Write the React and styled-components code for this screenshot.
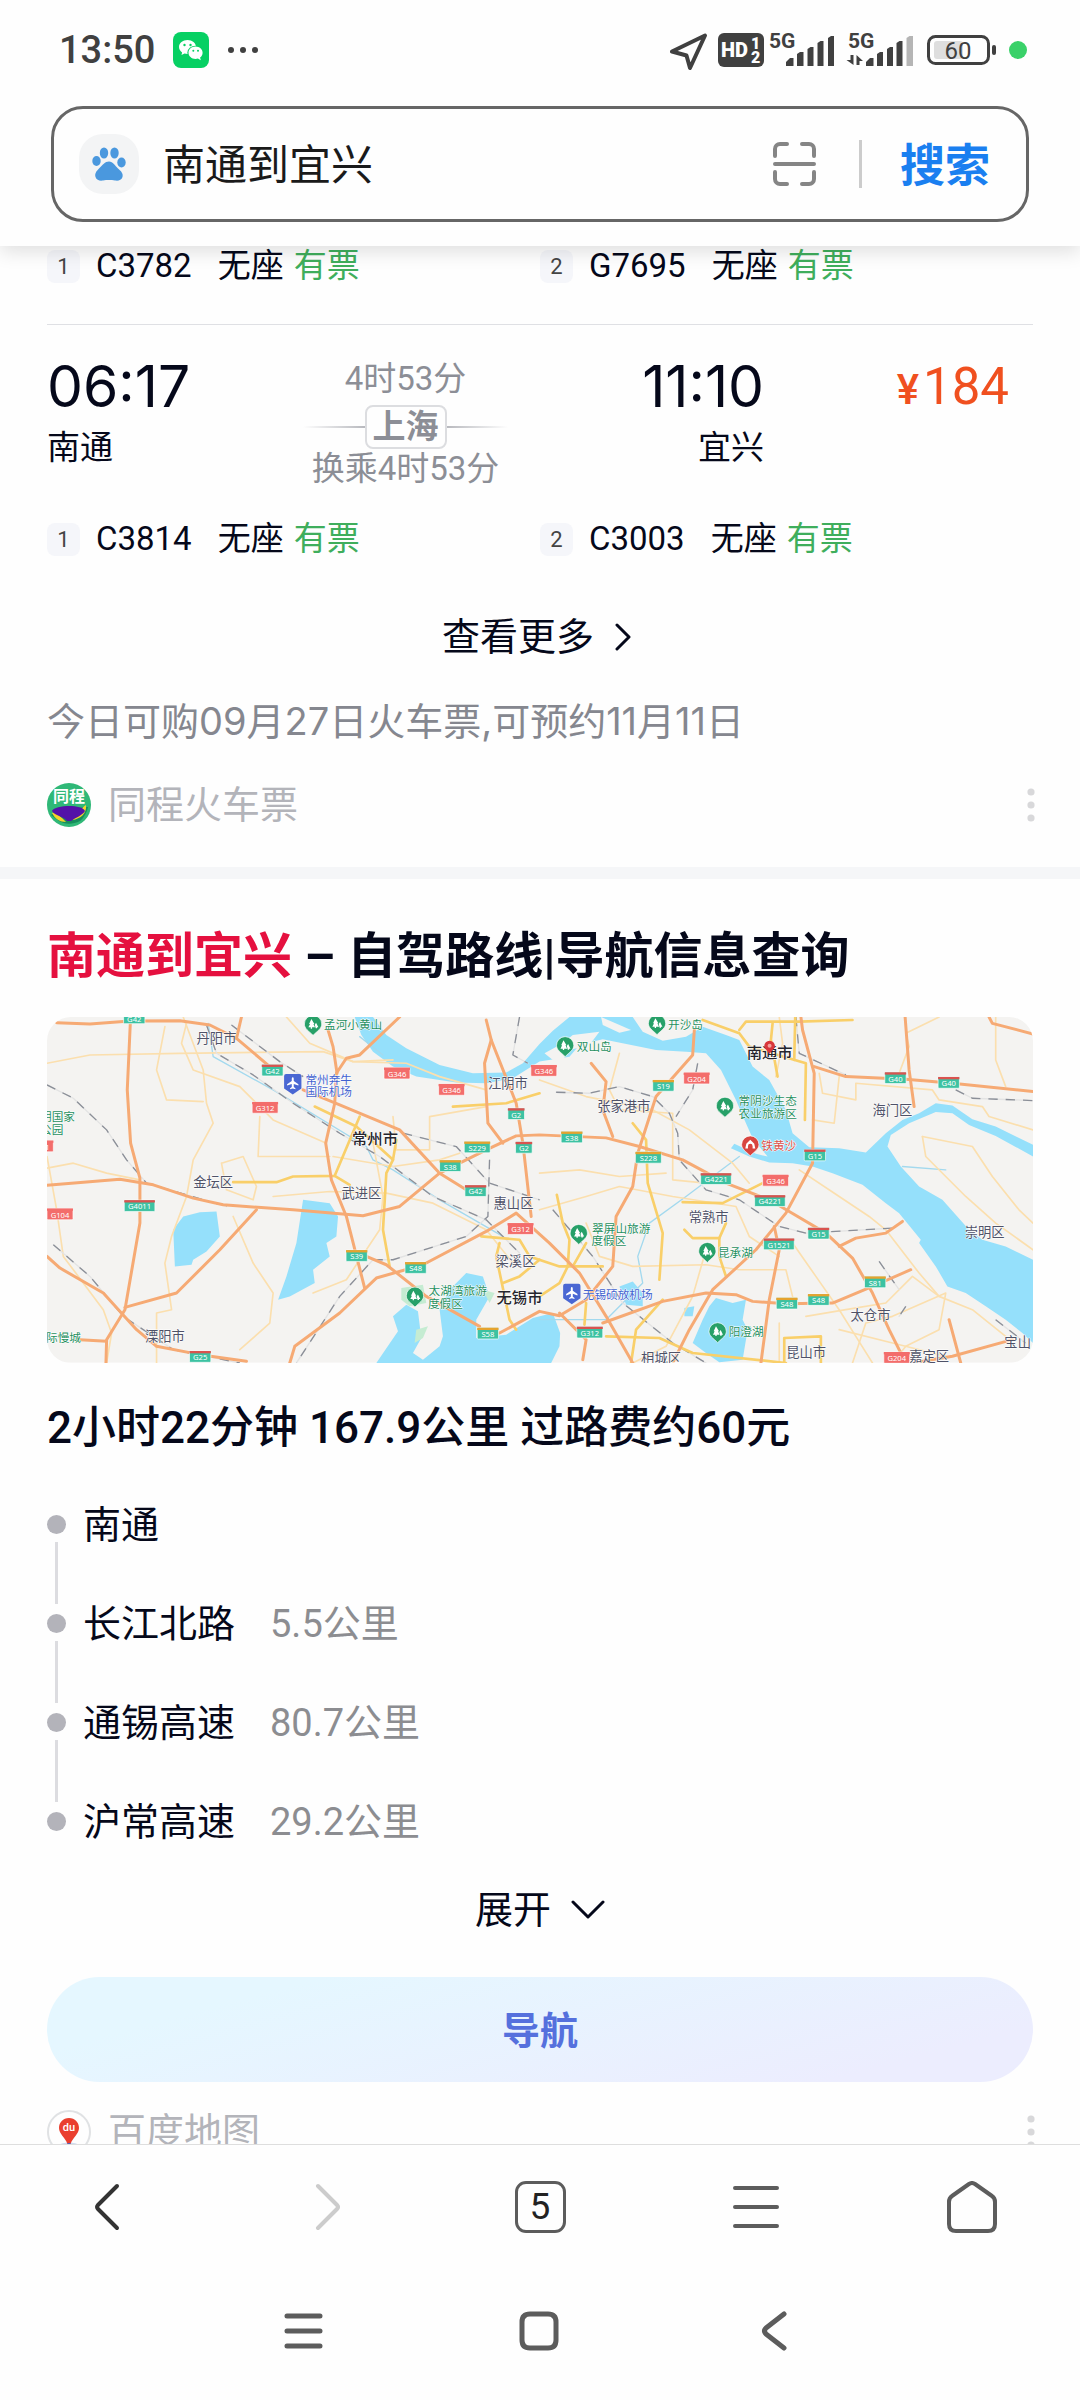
import React from 'react';
import styled, { createGlobalStyle } from 'styled-components';

const GlobalStyle = createGlobalStyle`
  * {
    box-sizing: border-box;
  }
  body {
    margin: 0;
    background: #fefefe;
    color: #05081a;
    font-family: Roboto, 'Noto Sans CJK SC', sans-serif;
  }
  button, input {
    font: inherit;
    color: inherit;
    padding: 0;
    border: none;
    background: none;
  }
  h2, p, ul {
    margin: 0;
    padding: 0;
  }
  svg {
    display: block;
    flex-shrink: 0;
  }
`;

const Page = styled.div`
  display: flex;
  flex-direction: column;
  height: 100vh;
`;

const Header = styled.header`
  z-index: 1;
  padding-bottom: 24px;
  background: #fefefe;
  box-shadow: 0 6px 18px rgba(0, 0, 0, 0.12);
`;

const StatusBar = styled.div`
  display: flex;
  align-items: center;
  justify-content: space-between;
  height: 100px;
  padding: 0 53px 0 59px;
  color: #404040;
`;

const StatusGroup = styled.div`
  display: flex;
  align-items: center;
  gap: ${(props) => props.$gap};
`;

const Clock = styled.span`
  font-size: 38px;
  font-weight: 500;
`;

const SearchBox = styled.form`
  display: flex;
  align-items: center;
  height: 116px;
  margin: 6px 51px 0;
  padding: 0 36px 0 25px;
  border: 3px solid #666;
  border-radius: 32px;
`;

const EngineBadge = styled.span`
  display: flex;
  align-items: center;
  justify-content: center;
  width: 60px;
  height: 60px;
  margin-right: 24px;
  border-radius: 24px;
  background: #f3f4f5;
`;

const SearchInput = styled.input`
  flex: 1;
  min-width: 0;
  padding-bottom: 6px;
  font-size: 42px;
  color: #1a1a1a;
  outline: none;
`;

const Separator = styled.span`
  width: 3px;
  height: 48px;
  margin: 0 38px 0 43px;
  background: #ccc;
`;

const SearchButton = styled.button`
  padding-bottom: 4px;
  font-size: 45px;
  font-weight: 700;
  color: #1a7ff0;
`;

const Content = styled.main`
  flex: 1;
  min-height: 0;
  overflow-y: auto;
  scrollbar-width: none;
`;

const Card = styled.section`
  padding: 0 47px;
`;

const Legs = styled.div`
  display: grid;
  grid-template-columns: 1fr 1fr;
  font-size: 33px;
  line-height: 40px;
`;

const Leg = styled.div`
  display: flex;
  align-items: center;
`;

const LegNumber = styled.span`
  width: 33px;
  height: 33px;
  margin-right: 16px;
  border-radius: 8px;
  background: #f5f6fa;
  color: #444;
  font-size: 22px;
  line-height: 33px;
  text-align: center;
`;

const Seat = styled.span`
  margin: 0 10px 0 26px;
`;

const Available = styled.span`
  color: #3fae5c;
`;

const Divider = styled.div`
  height: 1px;
  margin-top: 38px;
  background: #dfe0e4;
`;

const Journey = styled.div`
  display: grid;
  grid-template-columns: 20fr 16fr 20fr 21fr;
  padding: 30px 0;
  font-size: 33px;
  line-height: 40px;
`;

const Stop = styled.div`
  text-align: ${(props) => (props.$end ? 'right' : 'left')};
`;

const Time = styled.div`
  margin-bottom: 9px;
  font-family: Inter, sans-serif;
  font-size: 57px;
  line-height: 64px;
`;

const Transfer = styled.div`
  padding-top: 4px;
  color: #8c8e96;
  text-align: center;
  white-space: nowrap;
`;

const Via = styled.div`
  display: flex;
  align-items: center;
  margin-top: 6px;
`;

const ViaLine = styled.span`
  flex: 1;
  height: 2px;
  background: linear-gradient(to ${(props) => props.$to}, #fefefe, #b8b9be);
`;

const ViaCity = styled.span`
  padding: 0 6px;
  border: 2px solid #dcdde0;
  border-radius: 8px;
  font-weight: 700;
`;

const Price = styled.div`
  padding-right: 24px;
  color: #f0501f;
  font-size: 51px;
  line-height: 64px;
  text-align: right;
`;

const Currency = styled.span`
  margin-right: 4px;
  font-size: 42px;
  font-weight: 500;
`;

const MoreButton = styled.button`
  display: flex;
  align-items: center;
  gap: 20px;
  margin: ${(props) => props.$top} auto 0;
  font-size: 38px;
  line-height: 48px;
  cursor: pointer;
`;

const Note = styled.p`
  margin-top: 36px;
  color: #85878f;
  font-family: Inter, 'Noto Sans CJK SC', sans-serif;
  font-size: 38px;
  line-height: 48px;
`;

const Source = styled.div`
  display: flex;
  align-items: center;
  margin-top: ${(props) => props.$top};
  color: #b3b4ba;
  font-size: 38px;
  line-height: 48px;
`;

const SourceName = styled.span`
  flex: 1;
  margin-left: 17px;
`;

const DotsButton = styled.button`
  width: 8px;
  margin-right: -2px;
  cursor: pointer;
`;

const Band = styled.div`
  height: 12px;
  margin-top: 38px;
  background: #f5f6f8;
`;

const Title = styled.h2`
  padding: 46px 0 28px;
  font-size: 49px;
  font-weight: 700;
  line-height: 64px;
`;

const Keyword = styled.em`
  color: #e5103f;
  font-style: normal;
`;

const MapFrame = styled.div`
  overflow: hidden;
  border-radius: 24px;

  svg {
    width: 100%;
    height: auto;
  }
`;

const Summary = styled.p`
  margin-top: 37px;
  font-size: 44px;
  font-weight: 500;
  line-height: 56px;
`;

const Route = styled.ul`
  margin-top: 49px;
  list-style: none;
  font-size: 38px;
  line-height: 40px;
`;

const Step = styled.li`
  display: flex;
`;

const Marker = styled.span`
  display: flex;
  flex-direction: column;
  align-items: center;
  width: 19px;
  margin-right: 17px;
  padding-top: 10px;

  &::before {
    content: '';
    width: 19px;
    height: 19px;
    border-radius: 50%;
    background: #b3b3ba;
  }
`;

const MarkerLine = styled.span`
  width: 3px;
  height: 62px;
  margin-top: 8px;
  background: #dcdce0;
`;

const Distance = styled.span`
  margin-left: 35px;
  color: #8c8d91;
`;

const NavigateButton = styled.button`
  display: block;
  width: 100%;
  height: 105px;
  margin-top: 43px;
  padding-bottom: 4px;
  border-radius: 53px;
  background: linear-gradient(165deg, #e5f7ff 20%, #ecedfe 85%);
  color: #5570dd;
  font-size: 38px;
  font-weight: 700;
  cursor: pointer;
`;

const Toolbar = styled.nav`
  display: grid;
  grid-template-columns: repeat(5, 1fr);
  height: 127px;
  padding-bottom: 3px;
  border-top: 1px solid #dedede;
`;

const SystemBar = styled.nav`
  display: grid;
  grid-template-columns: repeat(3, 1fr);
  height: 129px;
  padding: 0 188px 10px 186px;
`;

const IconButton = styled.button`
  display: flex;
  align-items: center;
  justify-content: center;
  cursor: pointer;
`;

const TabCount = styled.span`
  width: 51px;
  height: 52px;
  border: 3px solid #5c5c5c;
  border-radius: 11px;
  color: #222;
  font-size: 37px;
  line-height: 46px;
  text-align: center;
`;

const legs = {
  first: [
    { code: 'C3782', seat: '无座' },
    { code: 'G7695', seat: '无座' },
  ],
  second: [
    { code: 'C3814', seat: '无座' },
    { code: 'C3003', seat: '无座' },
  ],
};

const steps = [
  { name: '南通' },
  { name: '长江北路', distance: '5.5公里' },
  { name: '通锡高速', distance: '80.7公里' },
  { name: '沪常高速', distance: '29.2公里' },
];

const Stroke = ({ w, h, d, color = '#5c5c5c', width = 3 }) => (
  <svg width={w} height={h} viewBox={`0 0 ${w} ${h}`} fill="none" stroke={color} strokeWidth={width} strokeLinecap="round" strokeLinejoin="round" aria-hidden="true">
    <path d={d} />
  </svg>
);

const WechatIcon = () => (
  <svg width="36" height="36" viewBox="0 0 36 36">
    <rect width="36" height="36" rx="8" fill="#07d063" />
    <path d="M14.500 8C9.800 8 6 11.100 6 15c0 2.200 1.200 4.100 3.100 5.400L8.500 23l3-1.500c1 .3 2 .4 3 .4 4.700 0 8.500-3.100 8.500-6.900S19.200 8 14.500 8z" fill="#fff" />
    <ellipse cx="22.500" cy="20.700" rx="8.200" ry="7" fill="#07d063" />
    <path d="M22.500 14.500c-3.900 0-7 2.800-7 6.200s3.100 6.200 7 6.200c.8 0 1.600-.1 2.400-.3l2.900 1.600-.7-2.600c1.500-1.200 2.500-2.900 2.500-4.900 0-3.400-3.200-6.200-7.100-6.200z" fill="#fff" />
    <g fill="#07d063">
      <circle cx="11.500" cy="13" r="1.200" />
      <circle cx="17.500" cy="13" r="1.200" />
      <circle cx="20.300" cy="18.800" r="1" />
      <circle cx="25" cy="18.800" r="1" />
    </g>
  </svg>
);

const MoreDots = () => (
  <svg width="32" height="8" viewBox="0 0 32 8" fill="#404040">
    <circle cx="4" cy="4" r="3" />
    <circle cx="16" cy="4" r="3" />
    <circle cx="28" cy="4" r="3" />
  </svg>
);

const StatusIcons = () => (
  <svg width="357" height="40" viewBox="670 30 357 40" fill="#404040" fontFamily="Roboto, sans-serif">
    <path d="M672 51.500L705 35.500L690 68L686.500 55.500Z" fill="none" stroke="#404040" strokeWidth="4" strokeLinejoin="round" />
    <rect x="718" y="33" width="46" height="34" rx="6" />
    <g fill="#fefefe" fontWeight="900">
      <text x="721" y="57" fontSize="20">HD</text>
      <text x="751" y="49" fontSize="16">1</text>
      <text x="751" y="63" fontSize="16">2</text>
    </g>
    <text x="769" y="48" fontSize="21" fontWeight="700">5G</text>
    <path d="M786 66v-4l4-4h3.500v8zM797 66V54l3-2h3.500v14zM807.500 66V49l3-2h3v19zM817.500 66V43l3-2h3v25zM828 66V38l3-2h3v30z" />
    <text x="848" y="48" fontSize="21" fontWeight="700">5G</text>
    <path d="M850.500 55h3v10l-7-5h4zM856.500 65h3v-4h3.500l-6.500-6z" />
    <path d="M866 66v-4l4-4h3.500v8zM877 66V54l3-2h3v14zM887 66V49l3-2h3v19zM896.500 66V43l3-2h3v25z" />
    <path d="M906.500 66V38l3-2h3.500v30z" fill="#b5b5b5" />
    <rect x="928.500" y="36.500" width="60" height="27" rx="7" fill="none" stroke="#404040" strokeWidth="3" />
    <rect x="934" y="41" width="29" height="18" rx="3" fill="#dedede" />
    <rect x="992" y="45" width="4" height="10" rx="2" />
    <text x="958" y="59" fontSize="24" textAnchor="middle">60</text>
    <circle cx="1018" cy="50" r="9" fill="#3ad169" />
  </svg>
);

const Paw = () => (
  <svg width="34" height="34" viewBox="0 0 34 34" fill="#4a98de">
    <ellipse cx="4.500" cy="14" rx="4.200" ry="5" />
    <ellipse cx="12" cy="6" rx="4.200" ry="5.500" />
    <ellipse cx="22.500" cy="6" rx="4.200" ry="5.500" />
    <ellipse cx="29.500" cy="15.500" rx="4.200" ry="5" />
    <path d="M17 14.500c4 0 6 4 9 7 3 2.500 5.500 5 4.500 8.500-1 3.500-4.500 4-7.500 3.500-4-.6-8-.6-12 0-3 .4-6.500 0-7.500-3.500-1-3.500 1-6 3.500-8.500 3.500-3.500 6-7 10-7z" />
  </svg>
);

const TongchengLogo = () => (
  <svg width="44" height="44" viewBox="0 0 44 44">
    <circle cx="22" cy="22" r="22" fill="#2fb877" />
    <path d="M4 32c4-4 30-8 37-8-1 5-4 11-8 14-8 4-16 3-21 0z" fill="#178e5c" />
    <path d="M5 30c4-1 6 2 10 5l4 4c-6 0-11-3-14-9zM39 22c-4 2-8 10-14 15 9-1 15-7 14-15z" fill="#f4d42a" />
    <path d="M5 28c3-6 30-7 33 0-3 5-9 6-14 10h-4c-4-5-12-5-15-10z" fill="#5312a8" />
    <text x="22" y="19" fill="#fff" fontFamily="'Noto Sans CJK SC', sans-serif" fontSize="16" fontWeight="700" textAnchor="middle">同程</text>
  </svg>
);

const BaiduMapLogo = () => (
  <svg width="44" height="44" viewBox="0 0 44 44">
    <circle cx="22" cy="22" r="21" fill="#fefefe" stroke="#e0e2e4" strokeWidth="2" />
    <path d="M9 37c6-6 20-6 26 0a21 21 0 0 1-26 0z" fill="#cfdcf0" />
    <path d="M22 8c-6 0-10 4.500-10 10 0 6 6 9 8.500 16v5h3v-5c2.500-7 8.500-10 8.500-16 0-5.500-4-10-10-10z" fill="#ea3f2f" />
    <rect x="20.500" y="33" width="3" height="7" fill="#5660b8" />
    <text x="22" y="21" fill="#fff" fontFamily="Roboto, sans-serif" fontSize="11" fontWeight="500" textAnchor="middle">du</text>
  </svg>
);

const VerticalDots = () => (
  <svg width="8" height="34" viewBox="0 0 8 34" fill="#d8d8da">
    <circle cx="4" cy="4" r="3.600" />
    <circle cx="4" cy="17" r="3.600" />
    <circle cx="4" cy="30" r="3.600" />
  </svg>
);

const water = [
  // Yangtze, both banks down to the estuary
  'M945 21L965 75L1000 125L1060 170L1130 200L1250 218L1340 220L1420 205L1500 155L1590 140L1620 105L1690 88L1850 120L1940 125L2000 130L2045 180L2090 270L2120 340L2140 385L2185 440L2150 432L2085 402L2075 415L2130 440L2190 458L2260 460L2320 470L2380 490L2470 525L2540 580L2580 610L2645 690L2640 700L2690 770L2725 830L2780 850L2840 890L2900 930L2950 970L2982 1000L2982 750L2900 710L2830 690L2790 660L2710 570L2640 530L2585 470L2545 410L2555 375L2610 340L2690 306L2740 310L2790 345L2870 378L2982 440L2982 405L2870 350L2800 328L2740 287L2690 280L2640 310L2590 330L2540 370L2480 428L2400 415L2310 412L2260 370L2240 300L2190 210L2140 170L2100 90L2060 75L1990 50L1940 80L1870 92L1810 65L1780 21L1590 21L1540 62L1500 102L1450 160L1400 188L1300 190L1200 165L1100 115L1040 75L1000 21Z',
  'M400 660L430 620L480 607L530 605L540 680L500 725L460 750L455 765L405 770Z',
  'M790 570L870 580L895 620L890 680L860 700L870 740L820 780L825 820L750 860L715 870L740 800L770 700Z',
  'M1010 1060L1075 965L1060 920L1100 885L1135 905L1145 985L1120 1030L1150 1050L1200 1010L1210 980L1200 900L1230 840L1280 790L1330 800L1350 860L1310 930L1310 985L1400 975L1480 925L1540 910L1562 970L1560 1010L1535 1060Z',
  'M1990 930L2010 890L2030 865L2080 880L2120 870L2110 930L2125 960L2110 1050L2040 1058L2000 1030L1960 1000Z',
  'M1935 895L1965 890L1960 920L1935 920Z',
  'M1740 830L1780 815L1810 850L1810 890L1760 885Z',
];

const islands = [
  'M1515 130L1570 100L1600 75L1680 65L1650 105L1590 120L1570 150L1540 150Z',
  'M1685 21L1775 60L1740 68L1690 45Z',
];

const parks = ['M1085 835L1150 825L1160 880L1110 890L1085 870Z', 'M1130 960L1165 950L1150 985L1125 1000Z', 'M1330 840L1365 850L1350 880Z'];

const lanes = [
  'M21 160L150 135L420 130L850 125L940 155L1100 160L1200 200L1340 240',
  'M440 40L425 100L460 180L600 230L700 330L860 400',
  'M430 21L490 180L500 280L520 340L460 450L440 560L395 680L375 760L395 900L350 910L350 1060',
  'M375 50L350 180L380 270L490 275',
  'M21 440L50 600L70 740L190 900L215 970L200 1060',
  'M21 475L100 460L200 490L300 510',
  'M545 460L610 440L650 530L640 570L560 540L545 460',
  'M660 320L655 440L870 440',
  'M580 620L640 760L700 850L690 940L600 1020',
  'M880 440L1060 470L1200 450L1260 430',
  'M700 560L870 545L1040 550L1180 580L1340 660L1420 760',
  'M1000 400L1030 560L1020 660L920 810L820 850',
  'M1060 320L1070 420L1170 420L1170 320L1340 290',
  'M740 21L810 100L940 155L1060 150',
  'M1500 210L1640 260L1840 300L1950 360L2080 460L2130 520',
  'M1740 130L1710 240L1740 300L1900 310L1900 510L2000 520',
  'M1500 490L1620 480L1740 500L1880 490',
  'M1500 600L1640 560L1740 530L1900 560L2090 590L2130 680L2220 740',
  'M1640 640L1680 740L1780 770L2000 765L2100 780L2240 780L2260 860',
  'M2000 720L1960 860L1880 1010L1780 1060',
  'M2280 480L2400 560L2490 620L2540 660L2640 790L2700 860L2800 900L2900 980',
  'M2260 700L2330 800L2400 900L2450 980L2500 1060',
  'M2340 190L2350 250L2450 270L2450 220L2680 240L2700 270L2830 290L2850 320L2982 360',
  'M2700 21L2600 70L2610 110L2580 190',
  'M2870 21L2870 150L2900 230',
  'M2220 21L2230 100L2210 200',
  'M2400 200L2385 340L2320 330',
  'M2650 380L2800 410L2860 500L2940 600L2982 640',
  'M2650 380L2660 440L2780 560L2870 640L2982 720',
  'M2300 920L2420 900L2540 880L2620 800L2700 860',
  'M2440 1060L2480 940L2560 920L2720 850L2700 960L2600 1010L2560 1060',
  'M2220 940L2220 1060',
  'M2400 960L2560 1000L2720 1040',
];

const avenues = [
  'M580 517L710 517L760 500L885 498L960 320',
  'M825 290L950 350L1060 450L1040 490L1030 660L1050 770',
  'M1070 390L1060 450',
  'M885 498L930 525',
  'M1240 290L1400 280L1500 250',
  'M1325 680L1440 690L1470 740L1560 770L1690 770',
  'M1380 700L1370 740L1410 930L1430 960',
  'M1390 820L1440 800L1500 750',
  'M1552 555L1570 640L1590 690L1585 770L1560 820L1500 860',
  'M1640 700L1600 770',
  'M1780 340L1820 390L1825 520L1870 670L1860 810',
  'M1930 577L2050 580L2170 520',
  'M1935 660L1960 685L2040 685L2060 640',
  'M2040 685L2040 740L2060 800',
  'M1990 30L2100 70L2130 110L2300 160L2297 330',
  'M2100 60L2120 35L2280 35L2440 30',
  'M2200 40L2195 90L2215 200',
  'M2268 21L2265 150',
  'M1640 880L1635 945',
  'M1700 980L1860 985L1960 1030L2240 1060',
  'M1870 870L1790 960L1775 1060',
  'M2235 1060L2235 985L2345 980L2345 1060',
];

const highways = [
  'M50 38L150 42L270 33L420 32L510 45L590 85L690 170',
  'M605 21L590 85',
  'M272 21L262 240L272 400L300 505L300 640L255 900L200 990L198 1060',
  'M21 526L240 508L340 525L460 565L550 585L760 600L970 618L1080 590L1200 490L1340 420L1430 378L1500 375L1700 384L1800 410L1930 450L2060 520L2190 570L2250 605L2360 670L2440 745L2500 850L2550 960L2600 1060',
  'M650 600L540 720L410 850L255 893',
  'M21 740L60 775L190 850L290 960L350 1010L480 1035L620 1055',
  'M120 990L200 995',
  'M1080 21L960 135L920 145L890 190L885 280L858 400L875 510L920 620L975 835',
  'M865 60L880 110L892 190',
  'M790 240L900 285L1080 360L1200 490L1280 540',
  'M750 1060L765 1010L900 910L1010 805L1150 765L1340 665L1430 610L1530 700L1620 790L1700 920L1780 1060',
  'M980 740L1040 765L1160 860L1320 950',
  'M1380 970L1500 905L1560 918L1640 870L1720 770L1730 620L1780 530L1795 430L1850 260L1960 135L1965 60',
  'M1340 30L1355 90L1335 160L1345 340L1390 400',
  'M1355 90L1430 280L1450 400L1475 620',
  'M1655 160L1700 215L1690 300L1720 380',
  'M1690 940L1870 875L2000 850L2090 855L2140 875L2240 882L2380 880L2500 830L2615 780',
  'M1630 1050L1640 990L1560 910',
  'M1900 1060L1950 960L2020 840L2150 720L2240 610L2320 460L2325 190L2290 60L2285 21',
  'M2205 650L2220 720L2190 870L2165 1060',
  'M2400 710L2450 685L2540 670L2590 635',
  'M2325 170L2420 200L2600 208L2740 220L2982 245',
  'M2598 21L2610 180L2625 290',
  'M2850 21L2860 40L2982 72',
  'M2730 930L2765 1060',
  'M2620 1060L2740 1040L2920 990',
];

const railways = [
  'M21 225L100 265L200 360L260 450L320 520L560 590',
  'M40 705L150 800L250 920L400 1020L600 1060',
  'M500 45L530 130L640 195L760 280L900 370L1020 440L1180 560L1340 630L1440 730',
  'M575 45L720 155L790 200',
  'M1090 370L1250 410L1350 520L1500 570',
  'M1350 450L1345 620L1280 680L1060 750L1000 750L900 860L770 1060',
  'M1440 21L1420 135L1465 160',
  'M1550 247L1650 250L1740 230L1840 260L1890 310L1915 370L1920 450L2000 540L2100 570L2220 650L2300 670L2560 655',
  'M1975 160L1960 240L1910 320',
  'M2270 21L2280 130L2420 195',
  'M2520 755L2580 840M2600 890L2580 920M2870 930L2960 1000',
  'M2750 240L2800 265L2982 272',
  'M1540 600L1660 740L1750 880L1900 1000L2000 1060',
];

const shields = [
  ['G42', 283, 24, 'g'], ['G42', 698, 181, 'g'], ['G312', 676, 293, 'r'], ['G346', 1072, 190, 'r'],
  ['G346', 1236, 239, 'r'], ['G346', 1513, 182, 'r'], ['G2', 1430, 312, 'g'], ['G2', 1453, 413, 'g'],
  ['S229', 1313, 412, 's'], ['S38', 1232, 468, 's'], ['G42', 1308, 543, 'g'], ['G312', 1443, 657, 'r'],
  ['G104', 60, 613, 'r'], ['G4011', 299, 588, 'g'], ['S39', 951, 738, 's'], ['S48', 1128, 774, 's'],
  ['S58', 1345, 971, 's'], ['G25', 481, 1041, 'g'], ['1', 22, 409, 'r'],
  ['S19', 1872, 227, 's'], ['G204', 1972, 205, 'r'], ['G40', 2569, 204, 'g'], ['G40', 2729, 218, 'g'],
  ['S38', 1597, 382, 's'], ['S228', 1827, 443, 's'], ['G15', 2327, 436, 'g'], ['G4221', 2030, 507, 'g'],
  ['G4221', 2192, 573, 'g'], ['G346', 2209, 512, 'r'], ['G15', 2338, 671, 'g'], ['G1521', 2219, 703, 'g'],
  ['S81', 2508, 817, 's'], ['S48', 2243, 881, 's'], ['S48', 2338, 870, 's'], ['G312', 1651, 968, 'g'],
  ['G204', 2573, 1044, 'r'],
];

const towns = [
  ['丹阳市', 530, 98], ['江阴市', 1405, 233], ['金坛区', 520, 532], ['武进区', 965, 566], ['惠山区', 1422, 595],
  ['梁溪区', 1428, 768], ['溧阳市', 375, 993], ['张家港市', 1753, 302], ['海门区', 2560, 314], ['常熟市', 2008, 637],
  ['崇明区', 2837, 682], ['太仓市', 2494, 930], ['昆山市', 2301, 1041], ['嘉定区', 2670, 1054], ['相城区', 1865, 1060],
  ['宝山', 2936, 1012],
];

const cities = [['常州市', 1006, 402], ['无锡市', 1440, 880], ['南通市', 2191, 145]];

const places = [
  ['孟河小黄山', 853, 58], ['开沙岛', 1886, 56], ['双山岛', 1612, 122], ['常阴沙生态', 2098, 285], ['农业旅游区', 2098, 324],
  ['翠屏山旅游', 1658, 669], ['度假区', 1656, 707], ['昆承湖', 2036, 741], ['阳澄湖', 2068, 979], ['太湖湾旅游', 1167, 857],
  ['度假区', 1165, 896], ['明国家', 0, 333], ['公园', 0, 371], ['际慢城', 18, 997],
];

const pins = [[820, 42], [1853, 40], [1577, 106], [2057, 288], [1618, 670], [2004, 724], [2035, 965], [1126, 858]];

const shieldColors = { g: '#d9534f', s: '#e5a32f', r: '#f36d6b' };

const Shield = ({ label, x, y, kind }) => {
  const w = 22 + label.length * 14;
  return (
    <g>
      <rect x={x - w / 2} y={y - 17} width={w} height="34" rx="3" fill={kind === 'r' ? '#f36d6b' : '#3dc2a2'} stroke="#fff" strokeWidth="2" />
      <rect x={x - w / 2} y={y - 17} width={w} height="7" fill={shieldColors[kind]} />
      <text x={x} y={y + 11} fill="#fff" fontSize="23" textAnchor="middle">{label}</text>
    </g>
  );
};

const RouteMap = () => (
  <svg viewBox="21 21 2961 1038" role="img" aria-label="南通到宜兴路线地图" fontFamily="'Noto Sans', 'Noto Sans CJK SC', sans-serif">
    <rect x="21" y="21" width="2961" height="1038" fill="#f4f3f1" />
    {water.map((d) => <path key={d} d={d} fill="#95e0fb" />)}
    {islands.map((d) => <path key={d} d={d} fill="#f4f3f1" />)}
    {parks.map((d) => <path key={d} d={d} fill="#c5ecd2" />)}
    <g fill="none" strokeLinejoin="round" strokeLinecap="round">
      <path d="M505 40L520 140L700 240L980 410L1000 450L1060 480L1200 570L1390 680M1500 930L1700 930L1810 820L1795 740L1830 640L1940 560L2100 440M2590 470L2720 480M960 80L1030 135" stroke="#a3d9ee" strokeWidth="4" />
      {lanes.map((d) => <path key={d} d={d} stroke="#fbdfae" strokeWidth="5" />)}
      {railways.map((d) => (
        <g key={d}>
          <path d={d} stroke="#e3e3e3" strokeWidth="4" />
          <path d={d} stroke="#8b8f98" strokeWidth="4" strokeDasharray="28 24" strokeLinecap="butt" />
        </g>
      ))}
      {avenues.map((d) => <path key={d} d={d} stroke="#f9cf69" strokeWidth="8" />)}
      {highways.map((d) => <path key={d} d={d} stroke="#f6aa74" strokeWidth="9" />)}
    </g>
    {shields.map(([label, x, y, kind]) => <Shield key={`${x}-${y}`} label={label} x={x} y={y} kind={kind} />)}
    {pins.map(([x, y]) => (
      <g key={`${x}-${y}`} transform={`translate(${x} ${y})`}>
        <path d="M-26 0a26 26 0 1 1 52 0c0 14-12 20-26 34c-14-14-26-20-26-34z" fill="#27a068" stroke="#fff" strokeWidth="2" />
        <path d="M-5-15L4 0H1L6 10H-3V14H-7V10H-14L-9 0H-12ZM9-4L16 10H12V13H8L5 2Z" fill="#fff" />
      </g>
    ))}
    {[[759, 220], [1597, 850]].map(([x, y]) => (
      <g key={x} transform={`translate(${x} ${y})`}>
        <path d="M-20-28H20a6 6 0 0 1 6 6V16L14 24L0 34L-14 24L-26 16V-22a6 6 0 0 1 6-6z" fill="#4a67d3" />
        <path d="M0-18c3 0 3 3 3 11L17 3V7L3 2V11L8 15V18L0 16L-8 18V15L-3 11V2L-17 7V3L-3-7C-3-15-3-18 0-18z" fill="#fff" />
      </g>
    ))}
    <g transform="translate(2133 404)">
      <path d="M-26 0a26 26 0 1 1 52 0c0 14-12 20-26 34c-14-14-26-20-26-34z" fill="#d8453f" stroke="#fff" strokeWidth="2" />
      <path d="M-12-2L0-14L12-2L15 12H7V5a7 7 0 0 0-14 0V12H-15Z" fill="#fff" />
    </g>
    <g stroke="#fff" strokeWidth="3" paintOrder="stroke" strokeLinejoin="round">
      <g fontSize="40" fill="#4f5268" textAnchor="middle">
        {towns.map(([name, x, y]) => <text key={name} x={x} y={y}>{name}</text>)}
      </g>
      <g fontSize="46" fontWeight="500" fill="#25252d" textAnchor="middle">
        {cities.map(([name, x, y]) => <text key={name} x={x} y={y}>{name}</text>)}
      </g>
      <g fontSize="35" fill="#1f8f5e">
        {places.map(([name, x, y]) => <text key={`${x}-${y}`} x={x} y={y}>{name}</text>)}
      </g>
      <g fontSize="35" fill="#4262d0">
        <text x="797" y="221">常州奔牛</text>
        <text x="797" y="259">国际机场</text>
        <text x="1630" y="868">无锡硕放机场</text>
      </g>
      <text x="2166" y="420" fontSize="35" fill="#d8504b">铁黄沙</text>
    </g>
    <path d="M2175 108a16 16 0 1 1 32 0c0 9-10 14-16 24c-6-10-16-15-16-24z" fill="#d8363a" />
    <circle cx="2191" cy="107" r="6" fill="#f4a09c" />
  </svg>
);

const TrainLegs = ({ items }) => (
  <Legs>
    {items.map((leg, index) => (
      <Leg key={leg.code}>
        <LegNumber>{index + 1}</LegNumber>
        <span>{leg.code}</span>
        <Seat>{leg.seat}</Seat>
        <Available>有票</Available>
      </Leg>
    ))}
  </Legs>
);

const App = () => {
  return (
    <Page>
      <GlobalStyle />
      <Header>
        <StatusBar>
          <StatusGroup $gap="18px">
            <Clock>13:50</Clock>
            <WechatIcon />
            <MoreDots />
          </StatusGroup>
          <StatusIcons />
        </StatusBar>
        <SearchBox onSubmit={(e) => e.preventDefault()}>
          <EngineBadge>
            <Paw />
          </EngineBadge>
          <SearchInput aria-label="搜索词" defaultValue="南通到宜兴" />
          <IconButton type="button" aria-label="扫一扫">
            <Stroke w={43} h={44} width={4} color="#858585" d="M2 14V7a5 5 0 0 1 5-5h7M29 2h7a5 5 0 0 1 5 5v7M2 22h39M2 30v7a5 5 0 0 0 5 5h7M29 42h7a5 5 0 0 0 5-5v-7" />
          </IconButton>
          <Separator />
          <SearchButton type="submit">搜索</SearchButton>
        </SearchBox>
      </Header>

      <Content>
        <Card>
          <TrainLegs items={legs.first} />
          <Divider />
          <Journey>
            <Stop>
              <Time>06:17</Time>
              南通
            </Stop>
            <Transfer>
              4时53分
              <Via>
                <ViaLine $to="right" />
                <ViaCity>上海</ViaCity>
                <ViaLine $to="left" />
              </Via>
              换乘4时53分
            </Transfer>
            <Stop $end>
              <Time>11:10</Time>
              宜兴
            </Stop>
            <Price>
              <Currency>¥</Currency>184
            </Price>
          </Journey>
          <TrainLegs items={legs.second} />
          <MoreButton type="button" $top="54px">
            查看更多
            <Stroke w={24} h={28} color="#05081a" d="M3 2L15 14L3 26" />
          </MoreButton>
          <Note>今日可购09月27日火车票,可预约11月11日</Note>
          <Source $top="36px">
            <TongchengLogo />
            <SourceName>同程火车票</SourceName>
            <DotsButton type="button" aria-label="更多">
              <VerticalDots />
            </DotsButton>
          </Source>
        </Card>
        <Band />
        <Card>
          <Title>
            <Keyword>南通到宜兴</Keyword> – 自驾路线|导航信息查询
          </Title>
          <MapFrame>
            <RouteMap />
          </MapFrame>
          <Summary>2小时22分钟 167.9公里 过路费约60元</Summary>
          <Route>
            {steps.map((step, index) => (
              <Step key={step.name}>
                <Marker>{index < steps.length - 1 && <MarkerLine />}</Marker>
                <span>{step.name}</span>
                {step.distance && <Distance>{step.distance}</Distance>}
              </Step>
            ))}
          </Route>
          <MoreButton type="button" $top="44px">
            展开
            <Stroke w={34} h={20} color="#05081a" d="M2 2L17 17L32 2" />
          </MoreButton>
          <NavigateButton type="button">导航</NavigateButton>
          <Source $top="26px">
            <BaiduMapLogo />
            <SourceName>百度地图</SourceName>
            <DotsButton type="button" aria-label="更多">
              <VerticalDots />
            </DotsButton>
          </Source>
        </Card>
      </Content>

      <Toolbar>
        <IconButton type="button" aria-label="后退">
          <Stroke w={29} h={48} width={4} color="#333" d="M23 3L4 22Q2 24 4 26L23 45" />
        </IconButton>
        <IconButton type="button" aria-label="前进">
          <Stroke w={33} h={48} width={4} color="#ccc" d="M10 3L29 22Q31 24 29 26L10 45" />
        </IconButton>
        <IconButton type="button" aria-label="标签页">
          <TabCount>5</TabCount>
        </IconButton>
        <IconButton type="button" aria-label="菜单">
          <Stroke w={46} h={44} width={4} d="M2 3H44M2 22H44M2 41H44" />
        </IconButton>
        <IconButton type="button" aria-label="主页">
          <Stroke w={50} h={52} width={4} d="M22 3Q25 1 28 3L45 15Q48 17 48 21V43Q48 50 41 50H9Q2 50 2 43V21Q2 17 5 15Z" />
        </IconButton>
      </Toolbar>
      <SystemBar>
        <IconButton type="button" aria-label="最近任务">
          <Stroke w={39} h={38} width={5} d="M3 4H36M3 19H36M3 34H36" />
        </IconButton>
        <IconButton type="button" aria-label="桌面">
          <Stroke w={40} h={40} width={5} d="M11 3H29Q37 3 37 11V29Q37 37 29 37H11Q3 37 3 29V11Q3 3 11 3Z" />
        </IconButton>
        <IconButton type="button" aria-label="返回">
          <Stroke w={26} h={40} width={5} d="M23 3L5 17Q2 20 5 23L23 37" />
        </IconButton>
      </SystemBar>
    </Page>
  );
};

export default App;
